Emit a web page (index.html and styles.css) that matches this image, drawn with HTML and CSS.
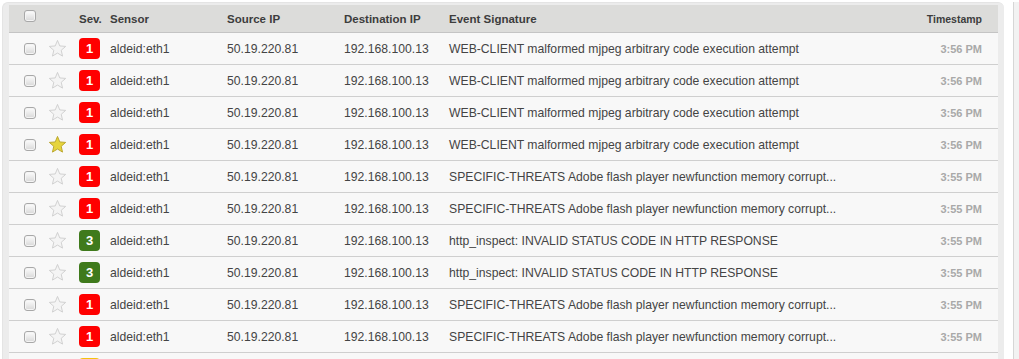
FILE: index.html
```html
<!DOCTYPE html>
<html>
<head>
<meta charset="utf-8">
<link rel="stylesheet" href="styles.css">
</head>
<body>
<div class="page">
  <div class="frame">
    <div class="events">
      <div class="row head">
        <div class="c-cb"><span class="cb"></span></div>
        <div class="c-star"></div>
        <div class="c-sev">Sev.</div>
        <div class="c-txt">Sensor</div>
        <div class="c-txt">Source IP</div>
        <div class="c-txt">Destination IP</div>
        <div class="c-txt">Event Signature</div>
        <div class="c-time ts-head">Timestamp</div>
      </div>
      <div id="rows"></div>
      <div class="row partial">
        <div class="c-cb"></div>
        <div class="c-star"></div>
        <div class="c-sev"><span class="badge sev2"></span></div>
      </div>
    </div>
  </div>
  <div class="side"></div>
</div>
<script src="app.js"></script>
</body>
</html>
```

FILE: styles.css
```css
html, body {
  margin: 0;
  padding: 0;
  height: 359px;
  overflow: hidden;
  background: #fff;
  font-family: "Liberation Sans", Arial, sans-serif;
}
.page {
  display: flex;
  height: 359px;
  padding-top: 2px;
  padding-left: 2px;
  box-sizing: border-box;
}
.frame {
  width: 1002px;
  background: #ececec;
  border-radius: 6px 6px 0 0;
  border-top: 1px solid #e4e4e4;
  border-left: 1px solid #e4e4e4;
  padding: 2px 6px 0 6px;
  box-sizing: border-box;
  overflow: hidden;
}
.side {
  margin-left: 9px;
  flex: 1;
  background: #f2f2f2;
  border-left: 1px solid #d6d6d6;
}
.events {
  background: #f8f8f8;
}
.row {
  display: grid;
  grid-template-columns: 37px 30px 31px 117px 117px 105px 1fr 110px;
  align-items: center;
  height: 31px;
  border-bottom: 1px solid #cfcfcf;
  font-size: 12.2px;
  color: #444;
}
.row.head {
  height: 27px;
  background: #dcdcda;
  border-bottom: 1px solid #c4c4c4;
  font-size: 11.5px;
  font-weight: bold;
  color: #3d3d3d;
}
.row.head .cb { margin-top: -5px; }
.c-cb {
  padding-left: 15px;
  display: flex;
}
.cb {
  width: 10px;
  height: 10px;
  border: 1px solid #a8a8a8;
  border-radius: 3px;
  background: linear-gradient(#fdfdfd, #d8d8d8);
  box-shadow: inset 0 0 0 1px #f4f4f4;
}
.c-star {
  display: flex;
  padding-left: 2px;
}
.c-star svg { display: block; }
.c-sev { padding-left: 3px; }
.c-txt { padding-left: 3px; white-space: nowrap; overflow: hidden; }
.c-time {
  text-align: right;
  padding-right: 16px;
  font-size: 11px;
  font-weight: bold;
  color: #a9a9a9;
}
.row.head .ts-head {
  font-size: 10.5px;
  color: #3d3d3d;
}
.badge {
  display: flex;
  align-items: center;
  justify-content: center;
  width: 21px;
  height: 21px;
  border-radius: 4px;
  color: #fff;
  font-weight: bold;
  font-size: 13px;
}
.sev1 { background: #ff0000; }
.sev3 { background: #3f7a1c; }
.sev2 { background: #f4c20d; }
```

FILE: app.js
```js
var data = [
  [1, false, "WEB-CLIENT malformed mjpeg arbitrary code execution attempt", "3:56 PM"],
  [1, false, "WEB-CLIENT malformed mjpeg arbitrary code execution attempt", "3:56 PM"],
  [1, false, "WEB-CLIENT malformed mjpeg arbitrary code execution attempt", "3:56 PM"],
  [1, true, "WEB-CLIENT malformed mjpeg arbitrary code execution attempt", "3:56 PM"],
  [1, false, "SPECIFIC-THREATS Adobe flash player newfunction memory corrupt...", "3:55 PM"],
  [1, false, "SPECIFIC-THREATS Adobe flash player newfunction memory corrupt...", "3:55 PM"],
  [3, false, "http_inspect: INVALID STATUS CODE IN HTTP RESPONSE", "3:55 PM"],
  [3, false, "http_inspect: INVALID STATUS CODE IN HTTP RESPONSE", "3:55 PM"],
  [1, false, "SPECIFIC-THREATS Adobe flash player newfunction memory corrupt...", "3:55 PM"],
  [1, false, "SPECIFIC-THREATS Adobe flash player newfunction memory corrupt...", "3:55 PM"]
];
function star(on) {
  var fill = on ? "#e6d43c" : "#f4f4f4";
  var stroke = on ? "#b8a42a" : "#cfcfcf";
  return '<svg width="19" height="19" viewBox="0 0 20 20"><path d="M10 1.5 L12.4 7.3 L18.6 7.8 L13.9 11.9 L15.3 18 L10 14.8 L4.7 18 L6.1 11.9 L1.4 7.8 L7.6 7.3 Z" fill="' + fill + '" stroke="' + stroke + '" stroke-width="1" stroke-linejoin="round"/></svg>';
}
var html = "";
data.forEach(function (d) {
  html += '<div class="row">' +
    '<div class="c-cb"><span class="cb"></span></div>' +
    '<div class="c-star">' + star(d[1]) + '</div>' +
    '<div class="c-sev"><span class="badge sev' + d[0] + '">' + d[0] + '</span></div>' +
    '<div class="c-txt">aldeid:eth1</div>' +
    '<div class="c-txt">50.19.220.81</div>' +
    '<div class="c-txt">192.168.100.13</div>' +
    '<div class="c-txt">' + d[2] + '</div>' +
    '<div class="c-time">' + d[3] + '</div>' +
    '</div>';
});
document.getElementById("rows").innerHTML = html;
```
